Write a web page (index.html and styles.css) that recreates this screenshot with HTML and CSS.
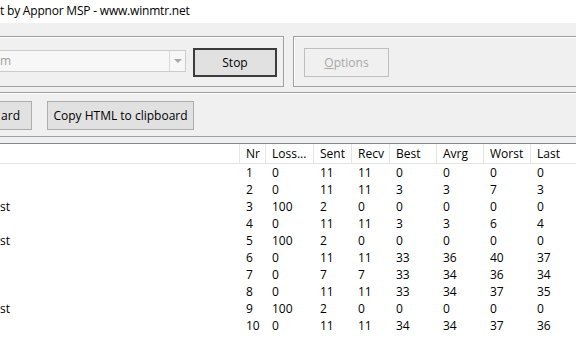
FILE: index.html
```html
<!DOCTYPE html>
<html>
<head>
<meta charset="utf-8">
<link rel="stylesheet" href="styles.css">
</head>
<body>
<div class="window">
  <div class="titlebar"><span class="title">t by Appnor MSP - www.winmtr.net</span></div>
  <div class="client">
    <div class="top-row">
      <div class="group group-host">
        <div class="combo">
          <div class="combo-text">m</div>
          <div class="combo-drop"><span class="arrow"></span></div>
        </div>
        <button class="btn btn-default">Stop</button>
      </div>
      <div class="group group-opts">
        <button class="btn btn-disabled"><span class="ul">O</span>ptions</button>
      </div>
    </div>
    <div class="frame-copy">
      <button class="btn btn-clipped">ard</button>
      <button class="btn btn-copy">Copy HTML to clipboard</button>
    </div>
    <div class="list">
      <div class="grid">
        <div class="hd host"></div>
        <div class="hd">Nr</div>
        <div class="hd">Loss...</div>
        <div class="hd">Sent</div>
        <div class="hd">Recv</div>
        <div class="hd">Best</div>
        <div class="hd">Avrg</div>
        <div class="hd">Worst</div>
        <div class="hd last">Last</div>

        <div class="c host"></div><div class="c">1</div><div class="c">0</div><div class="c">11</div><div class="c">11</div><div class="c">0</div><div class="c">0</div><div class="c">0</div><div class="c">0</div>
        <div class="c host"></div><div class="c">2</div><div class="c">0</div><div class="c">11</div><div class="c">11</div><div class="c">3</div><div class="c">3</div><div class="c">7</div><div class="c">3</div>
        <div class="c host">st</div><div class="c">3</div><div class="c">100</div><div class="c">2</div><div class="c">0</div><div class="c">0</div><div class="c">0</div><div class="c">0</div><div class="c">0</div>
        <div class="c host"></div><div class="c">4</div><div class="c">0</div><div class="c">11</div><div class="c">11</div><div class="c">3</div><div class="c">3</div><div class="c">6</div><div class="c">4</div>
        <div class="c host">st</div><div class="c">5</div><div class="c">100</div><div class="c">2</div><div class="c">0</div><div class="c">0</div><div class="c">0</div><div class="c">0</div><div class="c">0</div>
        <div class="c host"></div><div class="c">6</div><div class="c">0</div><div class="c">11</div><div class="c">11</div><div class="c">33</div><div class="c">36</div><div class="c">40</div><div class="c">37</div>
        <div class="c host"></div><div class="c">7</div><div class="c">0</div><div class="c">7</div><div class="c">7</div><div class="c">33</div><div class="c">34</div><div class="c">36</div><div class="c">34</div>
        <div class="c host"></div><div class="c">8</div><div class="c">0</div><div class="c">11</div><div class="c">11</div><div class="c">33</div><div class="c">34</div><div class="c">37</div><div class="c">35</div>
        <div class="c host">st</div><div class="c">9</div><div class="c">100</div><div class="c">2</div><div class="c">0</div><div class="c">0</div><div class="c">0</div><div class="c">0</div><div class="c">0</div>
        <div class="c host"></div><div class="c">10</div><div class="c">0</div><div class="c">11</div><div class="c">11</div><div class="c">34</div><div class="c">34</div><div class="c">37</div><div class="c">36</div>
      </div>
    </div>
  </div>
</div>
</body>
</html>
```

FILE: styles.css
```css
* { box-sizing: border-box; }
html, body {
  margin: 0;
  padding: 0;
  width: 576px;
  height: 356px;
  overflow: hidden;
  background: #f0f0f0;
  font-family: "Open Sans", "Noto Sans", sans-serif;
  font-size: 12px;
  color: #000;
}
.window { width: 576px; height: 356px; overflow: hidden; }
.titlebar {
  height: 23px;
  background: #fff;
  padding-top: 2px;
  line-height: 17px;
  white-space: nowrap;
}
.title { letter-spacing: -0.2px; }
.client { padding-top: 13px; }

.top-row { display: flex; gap: 9px; height: 51px; }
.group {
  border: 1px solid #a0a0a0;
  box-shadow: inset 1px 1px 0 #fff;
  display: flex;
  align-items: center;
}
.group-host {
  margin-left: -12px;
  width: 296px;
  flex: none;
  padding: 1px 6px 0 10px;
  gap: 7px;
}
.group-opts { flex: 1; margin-right: -10px; padding: 1px 0 0 10px; }

.combo {
  flex: 1;
  height: 22px;
  margin-top: -3px;
  border: 1px solid #cccccc;
  background: #f7f7f7;
  display: flex;
  align-items: center;
}
.combo-text { flex: 1; padding-left: 0; color: #a0a0a0; white-space: nowrap; line-height: 18px; }
.combo-drop {
  width: 16px;
  height: 20px;
  border-left: 1px solid #dadada;
  display: flex;
  align-items: center;
  justify-content: center;
}
.arrow {
  width: 0; height: 0;
  border-left: 4px solid transparent;
  border-right: 4px solid transparent;
  border-top: 4px solid #a8a8a8;
}

.btn {
  font: inherit;
  height: 29px;
  padding: 0;
  margin: 0;
  background: #e1e1e1;
  border: 1px solid #adadad;
  color: #000;
  display: flex;
  align-items: center;
  justify-content: center;
}
.btn-default { width: 84px; border: 2px solid #3c3c3c; background: #e1e1e1; }
.btn-disabled { width: 85px; background: #f0f0f0; border-color: #bfbfbf; color: #a8a8a8; }
.ul { text-decoration: underline; }

.frame-copy {
  margin-top: 5px;
  margin-left: -10px;
  margin-right: -10px;
  height: 45px;
  border: 1px solid #a0a0a0;
  box-shadow: inset 1px 1px 0 #fff;
  display: flex;
  align-items: center;
  gap: 15px;
  padding-top: 1px;
}
.btn-clipped { width: 146px; margin-left: -105px; justify-content: flex-end; padding-right: 11px; }
.btn-copy { width: 147px; }

.list {
  margin-top: 6px;
  border-top: 1px solid #828790;
  background: #fff;
  height: 220px;
}
.grid {
  display: grid;
  grid-template-columns: 240px 26px 48px 38px 38px 47px 47px 47px 1fr;
  grid-template-rows: 20px;
  grid-auto-rows: 17px;
}
.hd {
  height: 20px;
  line-height: 19px;
  padding-left: 6px;
  border-right: 1px solid #e5e5e5;
  border-bottom: 1px solid #e5e5e5;
  background: #fff;
  white-space: nowrap;
}
.hd.last { border-right: none; }
.c { padding-left: 6px; line-height: 18px; white-space: nowrap; }
.c.host { padding-left: 0; }
```
